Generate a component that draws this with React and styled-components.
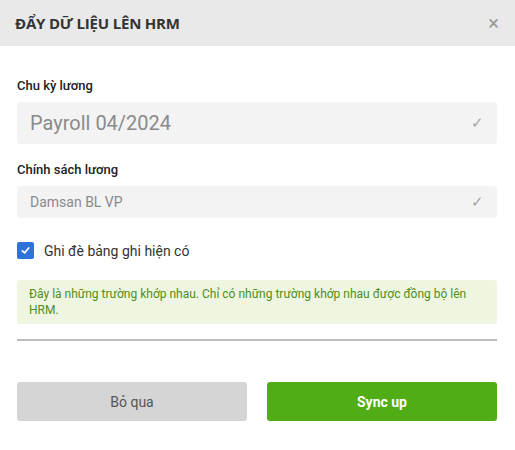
import React from "react";
import styled, { createGlobalStyle } from "styled-components";

const GlobalStyle = createGlobalStyle`
  body {
    margin: 0;
    background: #fff;
    font-family: Roboto, "Liberation Sans", Arial, sans-serif;
  }
`;

const Modal = styled.div`
  width: 515px;
  height: 450px;
  background: #fff;
  display: flex;
  flex-direction: column;
`;

const Header = styled.div`
  height: 46px;
  background: #e9e9e9;
  display: flex;
  align-items: center;
  justify-content: space-between;
  padding: 0 16px 0 15px;
  box-sizing: border-box;
`;

const Title = styled.h3`
  margin: 0;
  font-family: "Open Sans", "Noto Sans", sans-serif;
  font-weight: 700;
  font-size: 15px;
  color: #333;
  letter-spacing: -0.2px;
`;

const CloseBtn = styled.span`
  font-size: 20px;
  color: #9a9a9a;
  line-height: 1;
  cursor: pointer;
`;

const Body = styled.div`
  padding: 32px 18px 0 17px;
  display: flex;
  flex-direction: column;
`;

const Label = styled.div`
  font-size: 13px;
  font-weight: 500;
  color: #222;
  margin-bottom: 9px;
`;

const Select = styled.div`
  height: ${p => p.$h}px;
  background: #f3f3f3;
  border-radius: 3px;
  display: flex;
  align-items: center;
  justify-content: space-between;
  padding: 0 13px;
  box-sizing: border-box;
  color: #8a8a8a;
  font-size: ${p => p.$fs}px;
  margin-bottom: ${p => p.$mb}px;
`;

const Check = styled.span`
  color: #a5a5a5;
  font-size: 15px;
  font-weight: 300;
`;

const CheckRow = styled.label`
  display: flex;
  align-items: center;
  gap: 10px;
  font-size: 14px;
  color: #333;
  margin-bottom: 21px;
`;

const Box = styled.span`
  width: 17px;
  height: 17px;
  border-radius: 2px;
  background: #2e73d9;
  display: flex;
  align-items: center;
  justify-content: center;
`;

const Info = styled.div`
  background: #eef6e2;
  border-radius: 3px;
  color: #4e8f16;
  font-size: 12px;
  line-height: 16px;
  padding: 6px 12px;
`;

const Divider = styled.div`
  height: 2px;
  background: #bdbdbd;
  margin-top: 15px;
`;

const Actions = styled.div`
  display: grid;
  grid-template-columns: 1fr 1fr;
  gap: 20px;
  margin-top: 41px;
`;

const Button = styled.button`
  height: 39px;
  border: none;
  border-radius: 3px;
  font-family: Roboto, "Liberation Sans", sans-serif;
  font-size: 14px;
  background: ${p => (p.$primary ? "#51ad15" : "#d5d5d5")};
  color: ${p => (p.$primary ? "#fff" : "#555")};
  font-weight: ${p => (p.$primary ? 700 : 400)};
  cursor: pointer;
`;

export default function App() {
  return (
    <>
      <GlobalStyle />
      <Modal>
        <Header>
          <Title>ĐẨY DỮ LIỆU LÊN HRM</Title>
          <CloseBtn>×</CloseBtn>
        </Header>
        <Body>
          <Label>Chu kỳ lương</Label>
          <Select $h={42} $fs={20} $mb={18}>
            <span>Payroll 04/2024</span>
            <Check>✓</Check>
          </Select>
          <Label>Chính sách lương</Label>
          <Select $h={32} $fs={14} $mb={24}>
            <span>Damsan BL VP</span>
            <Check>✓</Check>
          </Select>
          <CheckRow>
            <Box>
              <svg width="11" height="11" viewBox="0 0 12 12">
                <path d="M2.5 6.3 L5 8.6 L9.5 3.2" stroke="#fff" strokeWidth="1.8" fill="none" strokeLinecap="round" strokeLinejoin="round" />
              </svg>
            </Box>
            Ghi đè bảng ghi hiện có
          </CheckRow>
          <Info>
            Đây là những trường khớp nhau. Chỉ có những trường khớp nhau được đồng bộ lên HRM.
          </Info>
          <Divider />
          <Actions>
            <Button>Bỏ qua</Button>
            <Button $primary>Sync up</Button>
          </Actions>
        </Body>
      </Modal>
    </>
  );
}
